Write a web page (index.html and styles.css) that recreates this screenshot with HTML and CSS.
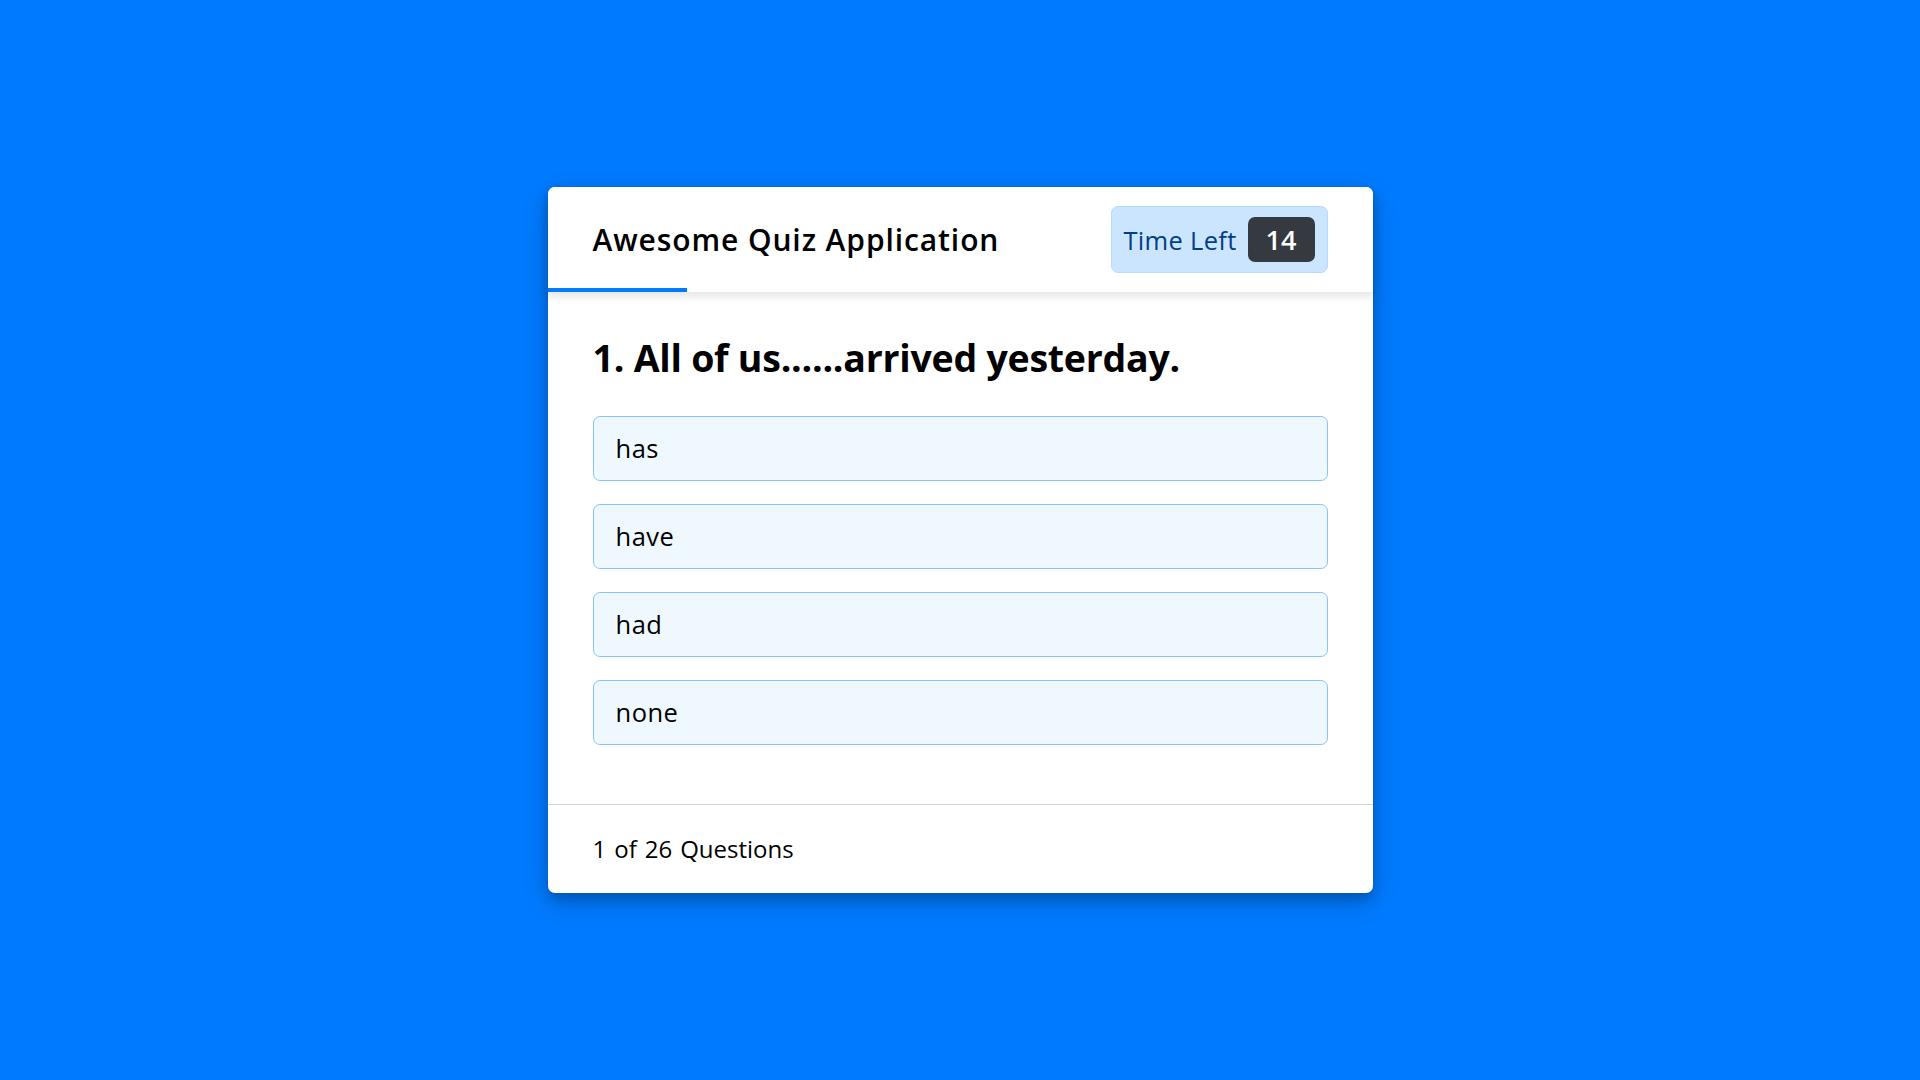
FILE: index.html
```html
<!DOCTYPE html>
<html lang="en">
<head>
<meta charset="utf-8">
<title>Awesome Quiz Application</title>
<link rel="stylesheet" href="styles.css">
</head>
<body>
<div class="quiz-box">
  <header class="quiz-header">
    <div class="title">Awesome Quiz Application</div>
    <div class="timer">
      <div class="time-left-txt">Time Left</div>
      <div class="timer-sec">14</div>
    </div>
    <div class="time-line"></div>
  </header>
  <section class="quiz-body">
    <div class="que-text">1. All of us......arrived yesterday.</div>
    <div class="option-list">
      <div class="option">has</div>
      <div class="option">have</div>
      <div class="option">had</div>
      <div class="option">none</div>
    </div>
  </section>
  <footer class="quiz-footer">
    <div class="total-que"><span class="num">1</span><span>of</span><span class="num">26</span><span>Questions</span></div>
  </footer>
</div>
</body>
</html>
```
FILE: styles.css
```css
* { box-sizing: border-box; margin: 0; padding: 0; }
html, body { height: 100%; }
body {
  background: #007bff;
  font-family: "Open Sans", "Noto Sans", sans-serif;
  display: flex;
  align-items: center;
  justify-content: center;
  color: #000;
}
.quiz-box {
  width: 825px;
  background: #fff;
  border-radius: 7px;
  box-shadow: 0 6px 12px 0 rgba(0,0,0,0.2), 0 9px 30px 0 rgba(0,0,0,0.19);
}
.quiz-header {
  position: relative;
  z-index: 2;
  height: 105px;
  padding: 0 45px;
  background: #fff;
  border-radius: 7px 7px 0 0;
  display: flex;
  align-items: center;
  justify-content: space-between;
  box-shadow: 0 4px 8px 1px rgba(0,0,0,0.1);
}
.title {
  font-size: 30px;
  font-weight: 600;
  letter-spacing: 0.9px;
}
.timer {
  color: #004085;
  background: #cce5ff;
  border: 1px solid #b8daff;
  height: 67px;
  width: 217px;
  padding: 0 12px;
  border-radius: 7px;
  display: flex;
  align-items: center;
  justify-content: space-between;
}
.time-left-txt { font-size: 25.5px; font-weight: 400; letter-spacing: 0.3px; }
.timer-sec {
  font-size: 27px;
  font-weight: 600;
  height: 45px;
  width: 67px;
  line-height: 45px;
  text-align: center;
  color: #fff;
  background: #343a40;
  border-radius: 7px;
}
.time-line {
  position: absolute;
  left: 0;
  bottom: 0;
  width: 139px;
  height: 4px;
  background: #007bff;
}
.quiz-body {
  padding: 38px 45px 29px 45px;
  background: #fff;
}
.que-text { font-size: 37.5px; font-weight: 700; line-height: 1.5; letter-spacing: -0.25px; }
.option-list { padding: 30px 0; display: flex; flex-direction: column; gap: 23.5px; }
.option {
  background: aliceblue;
  border: 1px solid #84c5fe;
  border-radius: 7px;
  padding: 12px 22px;
  font-size: 25.5px;
  line-height: 38.5px;
  letter-spacing: 0.5px;
}
.quiz-footer {
  height: 89px;
  padding: 0 45px;
  display: flex;
  align-items: center;
  border-top: 1px solid lightgrey;
}
.total-que { display: flex; gap: 8px; font-size: 24px; }
.total-que .num { font-weight: 500; }
```
